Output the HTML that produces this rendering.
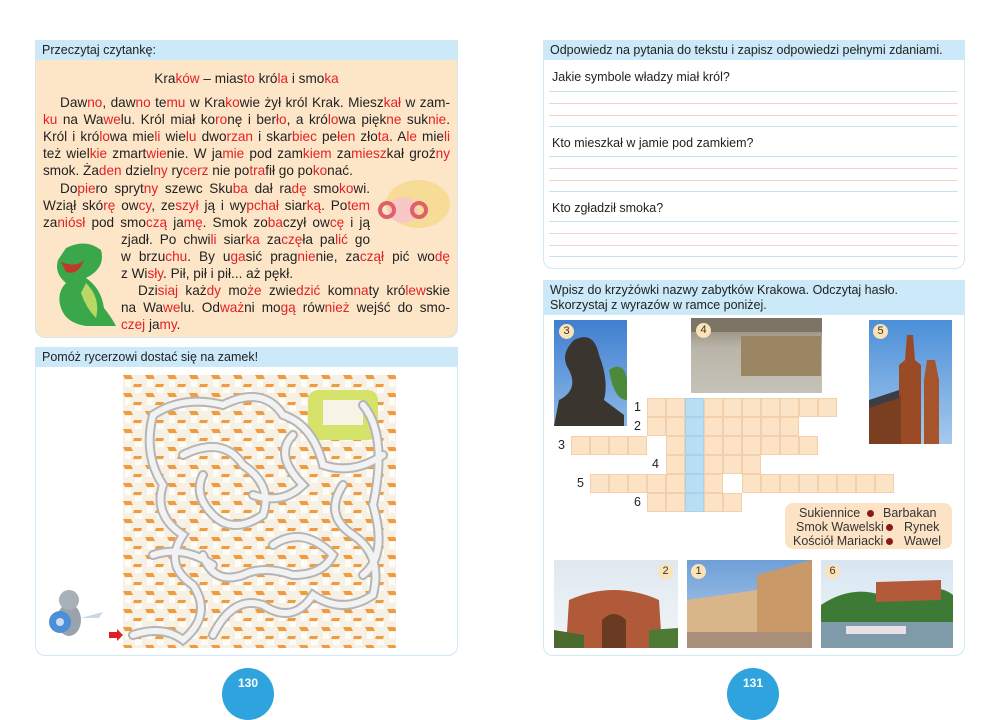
<!DOCTYPE html>
<html><head><meta charset="utf-8">
<style>
*{margin:0;padding:0;box-sizing:border-box}
body{width:1000px;height:701px;background:#fff;position:relative;overflow:hidden;font-family:"Liberation Sans",sans-serif;color:#222}
.box{position:absolute;border:1.5px solid #cfe8f4;border-radius:0 0 10px 10px;background:#fff}
.hd{position:absolute;left:0;right:0;top:0;background:#cbe9f8;font-size:12.5px;padding:2px 6px;line-height:15px}
.ln{position:absolute;height:17px;line-height:17px;font-size:13.6px;white-space:nowrap;text-align:justify;text-align-last:justify}
.r{color:#e32128}
.c{text-align:center;text-align-last:center}
.q{position:absolute;left:8px;font-size:12.5px}
.rl{position:absolute;left:5px;right:6px;height:1px}
.b{background:#c6e4ef}.p{background:#f4d2d4}
.cell{position:absolute;width:19px;height:19px;background:#fde3c6;border:1px solid #f2d0ab}
.cell.bl{background:#b8def3;border-color:#a6d2ea}
.num{position:absolute;font-size:12.5px}
.ph{position:absolute;overflow:hidden}
.bd{position:absolute;width:15px;height:15px;border-radius:50%;background:#fbe3b6;font-size:11px;text-align:center;line-height:15px;color:#333}
.pn{position:absolute;width:52px;height:52px;border-radius:50%;background:#2ea3dd;color:#fff;font-weight:bold;font-size:12px;text-align:center;line-height:30px;top:668px}
</style></head><body>

<div class="box" style="left:35px;top:40px;width:423px;height:298px;background:#fde6c7;border-color:#d6e6ea">
<div class="hd">Przeczytaj czytankę:</div>
</div>
<div style="position:absolute;left:0;top:0">
<div class="ln c" style="left:43px;width:407px;top:70px">Kra<span class="r">ków</span> – mias<span class="r">to</span> kró<span class="r">la</span> i smo<span class="r">ka</span></div>
<div class="ln" style="left:60px;width:390px;top:94px">Daw<span class="r">no</span>, daw<span class="r">no</span> te<span class="r">mu</span> w Kra<span class="r">ko</span>wie żył król Krak. Miesz<span class="r">kał</span> w zam-</div>
<div class="ln" style="left:43px;width:407px;top:111px"><span class="r">ku</span> na Wa<span class="r">we</span>lu. Król miał ko<span class="r">ro</span>nę i ber<span class="r">ło</span>, a kró<span class="r">lo</span>wa pięk<span class="r">ne</span> suk<span class="r">nie</span>.</div>
<div class="ln" style="left:43px;width:407px;top:128px">Król i kró<span class="r">lo</span>wa mie<span class="r">li</span> wie<span class="r">lu</span> dwo<span class="r">rzan</span> i skar<span class="r">biec</span> pe<span class="r">łen</span> zło<span class="r">ta</span>. A<span class="r">le</span> mie<span class="r">li</span></div>
<div class="ln" style="left:43px;width:407px;top:145px">też wiel<span class="r">kie</span> zmart<span class="r">wie</span>nie. W ja<span class="r">mie</span> pod zam<span class="r">kiem</span> za<span class="r">miesz</span>kał groź<span class="r">ny</span></div>
<div class="ln" style="left:43px;top:162px">smok. Ża<span class="r">den</span> dziel<span class="r">ny</span> ry<span class="r">cerz</span> nie po<span class="r">tra</span>fił go po<span class="r">ko</span>nać.</div>
<div class="ln" style="left:60px;width:310px;top:180px">Do<span class="r">pie</span>ro spryt<span class="r">ny</span> szewc Sku<span class="r">ba</span> dał ra<span class="r">dę</span> smo<span class="r">ko</span>wi.</div>
<div class="ln" style="left:43px;width:327px;top:197px">Wziął skó<span class="r">rę</span> ow<span class="r">cy</span>, ze<span class="r">szył</span> ją i wy<span class="r">pchał</span> siar<span class="r">ką</span>. Po<span class="r">tem</span></div>
<div class="ln" style="left:43px;width:327px;top:214px">za<span class="r">niósł</span> pod smo<span class="r">czą</span> ja<span class="r">mę</span>. Smok zo<span class="r">ba</span>czył ow<span class="r">cę</span> i ją</div>
<div class="ln" style="left:121px;width:249px;top:231px">zjadł. Po chwi<span class="r">li</span> siar<span class="r">ka</span> za<span class="r">czę</span>ła pa<span class="r">lić</span> go</div>
<div class="ln" style="left:121px;width:329px;top:248px">w brzu<span class="r">chu</span>. By u<span class="r">ga</span>sić prag<span class="r">nie</span>nie, za<span class="r">czął</span> pić wo<span class="r">dę</span></div>
<div class="ln" style="left:121px;top:265px">z Wi<span class="r">sły</span>. Pił, pił i pił... aż pękł.</div>
<div class="ln" style="left:138px;width:312px;top:282px">Dzi<span class="r">siaj</span> każ<span class="r">dy</span> mo<span class="r">że</span> zwie<span class="r">dzić</span> kom<span class="r">na</span>ty kró<span class="r">lew</span>skie</div>
<div class="ln" style="left:121px;width:329px;top:299px">na Wa<span class="r">we</span>lu. Od<span class="r">waż</span>ni mo<span class="r">gą</span> rów<span class="r">nież</span> wejść do smo-</div>
<div class="ln" style="left:121px;top:316px"><span class="r">czej</span> ja<span class="r">my</span>.</div>
</div>
<svg style="position:absolute;left:376px;top:178px" width="78" height="58">
<ellipse cx="42" cy="26" rx="32" ry="24" fill="#f6dc97"/>
<ellipse cx="27" cy="32" rx="15" ry="13" fill="#f7c8c6"/>
<circle cx="11" cy="32" r="7" fill="none" stroke="#e0606a" stroke-width="4"/>
<circle cx="43" cy="32" r="7" fill="none" stroke="#e0606a" stroke-width="4"/>
</svg>
<svg style="position:absolute;left:46px;top:238px" width="72" height="92">
<path d="M20 10 Q40 0 55 12 Q60 30 40 40 Q55 50 58 70 Q66 80 70 88 L40 88 Q20 85 15 70 Q10 55 20 45 Q8 35 12 22 Z" fill="#3aa84a"/>
<path d="M40 45 Q55 60 50 80 Q40 70 35 55 Z" fill="#b7d964"/>
<path d="M15 24 Q30 30 38 22 Q32 38 20 34 Z" fill="#c0392b"/>
</svg>

<div class="box" style="left:35px;top:347px;width:423px;height:309px">
<div class="hd">Pomóż rycerzowi dostać się na zamek!</div>
</div>
<svg style="position:absolute;left:123px;top:375px" width="273" height="273">
<defs>
<pattern id="hs" width="22" height="18" patternUnits="userSpaceOnUse">
<rect width="22" height="18" fill="#f6f1e4"/>
<path d="M0 0 L8 0 L10 4 L2 4 Z M11 9 L19 9 L18 12 L10 12 Z" fill="#f19a3e"/>
<rect x="2" y="5" width="6" height="7" fill="#fdfcf6"/>
<rect x="12" y="13" width="7" height="5" fill="#fdfcf6"/>
</pattern>
</defs>
<rect width="273" height="273" fill="url(#hs)"/>
<rect x="185" y="15" width="70" height="50" fill="#d6e36a" rx="10"/>
<rect x="200" y="25" width="40" height="25" fill="#f7f3e6"/>
<g fill="none" stroke="#b5b5b5" stroke-width="10" stroke-linecap="round">
<path id="a" d="M10 260 Q40 250 60 265 Q90 240 70 210 Q40 190 60 160 Q30 140 40 110 Q20 80 30 40 Q60 20 100 30 Q140 10 160 40 Q190 50 200 90 Q230 100 260 80"/>
<path d="M90 260 Q110 220 140 230 Q170 250 190 220 Q220 240 250 220 Q260 180 230 160 Q200 140 220 110"/>
<path d="M60 80 Q100 60 120 90 Q150 110 140 140 Q110 160 90 140 Q70 120 80 100"/>
<path d="M150 170 Q180 150 210 180 Q200 200 170 200 Q140 190 120 200 Q90 210 80 180"/>
<path d="M30 180 Q60 170 90 190"/>
<path d="M170 60 Q150 80 180 110 Q160 130 130 120"/>
<path d="M240 30 Q265 60 250 130 Q265 180 240 200"/>
</g>
<g fill="none" stroke="#f2f2f2" stroke-width="6" stroke-linecap="round">
<path d="M10 260 Q40 250 60 265 Q90 240 70 210 Q40 190 60 160 Q30 140 40 110 Q20 80 30 40 Q60 20 100 30 Q140 10 160 40 Q190 50 200 90 Q230 100 260 80"/>
<path d="M90 260 Q110 220 140 230 Q170 250 190 220 Q220 240 250 220 Q260 180 230 160 Q200 140 220 110"/>
<path d="M60 80 Q100 60 120 90 Q150 110 140 140 Q110 160 90 140 Q70 120 80 100"/>
<path d="M150 170 Q180 150 210 180 Q200 200 170 200 Q140 190 120 200 Q90 210 80 180"/>
<path d="M30 180 Q60 170 90 190"/>
<path d="M170 60 Q150 80 180 110 Q160 130 130 120"/>
<path d="M240 30 Q265 60 250 130 Q265 180 240 200"/>
</g>
</svg>
<svg style="position:absolute;left:45px;top:580px" width="80" height="70">
<ellipse cx="24" cy="40" rx="12" ry="16" fill="#9aa3ad"/>
<circle cx="24" cy="20" r="10" fill="#a8b0b8"/>
<circle cx="15" cy="42" r="11" fill="#4b8fd6"/><circle cx="15" cy="42" r="4" fill="#cde"/>
<path d="M36 38 L58 32 L54 38 Z" fill="#c9d8e4"/>
<path d="M64 52 L72 52 L72 49 L78 55 L72 61 L72 58 L64 58 Z" fill="#e02020"/>
</svg>
<div class="pn" style="left:222px">130</div>

<div class="box" style="left:543px;top:40px;width:422px;height:229px">
<div class="hd">Odpowiedz na pytania do tekstu i zapisz odpowiedzi pełnymi zdaniami.</div>
<div class="q" style="top:29px">Jakie symbole władzy miał król?</div>
<div class="rl b" style="top:50px"></div><div class="rl p" style="top:62px"></div><div class="rl p" style="top:74px"></div><div class="rl b" style="top:85px"></div>
<div class="q" style="top:95px">Kto mieszkał w jamie pod zamkiem?</div>
<div class="rl b" style="top:115px"></div><div class="rl p" style="top:127px"></div><div class="rl p" style="top:139px"></div><div class="rl b" style="top:150px"></div>
<div class="q" style="top:160px">Kto zgładził smoka?</div>
<div class="rl b" style="top:180px"></div><div class="rl p" style="top:192px"></div><div class="rl p" style="top:204px"></div><div class="rl b" style="top:215px"></div>
</div>

<div class="box" style="left:543px;top:280px;width:422px;height:376px">
<div class="hd" style="line-height:14.5px;padding-top:2px;height:34px">Wpisz do krzyżówki nazwy zabytków Krakowa. Odczytaj hasło.<br>Skorzystaj z wyrazów w ramce poniżej.</div>
</div>
<div class="ph" style="left:554px;top:320px;width:73px;height:106px;background:linear-gradient(#3f7fd0,#8cb8e8)"><svg width="73" height="106"><path d="M20 20 Q40 10 45 35 Q55 60 50 80 L70 95 L70 106 L0 106 L5 80 Q25 70 15 50 Q5 35 20 20Z" fill="#3b3530"/><path d="M55 50 Q70 40 73 60 L73 80 Q60 80 55 50Z" fill="#4a8a3a"/></svg><div class="bd" style="left:5px;top:4px">3</div></div>
<div class="ph" style="left:691px;top:318px;width:131px;height:75px;background:linear-gradient(#8a8070,#b9b5a8 40%,#c5c2b8)"><div style="position:absolute;left:50px;top:18px;width:80px;height:40px;background:#9b8664"></div><div style="position:absolute;left:0;top:0;width:131px;height:14px;background:#7d7466"></div><div class="bd" style="left:5px;top:5px">4</div></div>
<div class="ph" style="left:869px;top:320px;width:83px;height:124px;background:linear-gradient(#4b8fd8,#a6c9ee)"><svg width="83" height="124"><path d="M38 15 L44 15 L46 40 L52 45 L52 124 L30 124 L30 45 L36 40Z" fill="#9a4a25"/><path d="M58 40 L66 40 L70 60 L70 124 L55 124 L55 60Z" fill="#a5542c"/><path d="M0 85 L32 75 L32 124 L0 124Z" fill="#7a3e20"/><path d="M0 80 L30 70 L30 78 L0 88Z" fill="#3c3c44"/></svg><div class="bd" style="left:4px;top:4px">5</div></div>
<div class="ph" style="left:554px;top:560px;width:124px;height:88px;background:linear-gradient(#dfe8f0,#f2f5f8)"><svg width="124" height="88"><path d="M15 40 Q60 20 105 40 L108 88 L12 88Z" fill="#b05a3a"/><path d="M48 60 Q60 48 72 60 L72 88 L48 88Z" fill="#6a3a22"/><path d="M0 70 L30 75 L30 88 L0 88Z" fill="#4b6a30"/><path d="M95 70 L124 68 L124 88 L95 88Z" fill="#4f7a35"/></svg><div class="bd" style="right:5px;top:4px">2</div></div>
<div class="ph" style="left:687px;top:560px;width:125px;height:88px;background:linear-gradient(#6f9fd8,#b8d2ee)"><svg width="125" height="88"><path d="M0 40 L70 30 L70 75 L0 75Z" fill="#d9b58a"/><path d="M70 15 L125 0 L125 75 L70 75Z" fill="#c99a68"/><rect x="0" y="72" width="125" height="16" fill="#a98f7a"/></svg><div class="bd" style="left:4px;top:4px">1</div></div>
<div class="ph" style="left:821px;top:560px;width:132px;height:88px;background:linear-gradient(#d8e6f2,#eef3f7)"><svg width="132" height="88"><path d="M0 45 Q30 25 60 35 L100 30 Q120 25 132 35 L132 65 L0 65Z" fill="#3d7a35"/><path d="M55 22 L120 20 L120 40 L55 42Z" fill="#b25a3a"/><rect y="62" width="132" height="26" fill="#7f9aa8"/><rect x="25" y="66" width="60" height="8" fill="#e8e0e6"/></svg><div class="bd" style="left:4px;top:4px">6</div></div>

<div id="cw"></div>
<div class="num" style="left:634px;top:400px">1</div>
<div class="num" style="left:634px;top:419px">2</div>
<div class="num" style="left:558px;top:438px">3</div>
<div class="num" style="left:652px;top:457px">4</div>
<div class="num" style="left:577px;top:476px">5</div>
<div class="num" style="left:634px;top:495px">6</div>
<div style="position:absolute;left:785px;top:503px;width:167px;height:46px;background:#fde3c6;border-radius:8px;font-size:12.5px;line-height:14px;color:#333">
<div style="position:absolute;left:14px;top:3px">Sukiennice</div><div style="position:absolute;left:82px;top:7px;width:7px;height:7px;border-radius:50%;background:#8a1a1a"></div><div style="position:absolute;left:98px;top:3px">Barbakan</div>
<div style="position:absolute;left:11px;top:17px">Smok Wawelski</div><div style="position:absolute;left:101px;top:21px;width:7px;height:7px;border-radius:50%;background:#8a1a1a"></div><div style="position:absolute;left:119px;top:17px">Rynek</div>
<div style="position:absolute;left:8px;top:31px">Kościół Mariacki</div><div style="position:absolute;left:101px;top:35px;width:7px;height:7px;border-radius:50%;background:#8a1a1a"></div><div style="position:absolute;left:119px;top:31px">Wawel</div>
</div>
<div class="pn" style="left:727px">131</div>

<script>
var rows=[[398,4,13,[]],[417,4,11,[]],[436,0,12,[4]],[455,5,9,[]],[474,1,16,[8]],[493,4,8,[]]];
var h='';rows.forEach(function(r){for(var c=r[1];c<=r[2];c++){if(r[3].indexOf(c)>=0)continue;h+='<div class="cell'+(c==6?' bl':'')+'" style="left:'+(571+c*19)+'px;top:'+r[0]+'px"></div>';}});
document.getElementById('cw').innerHTML=h;
</script>
</body></html>
